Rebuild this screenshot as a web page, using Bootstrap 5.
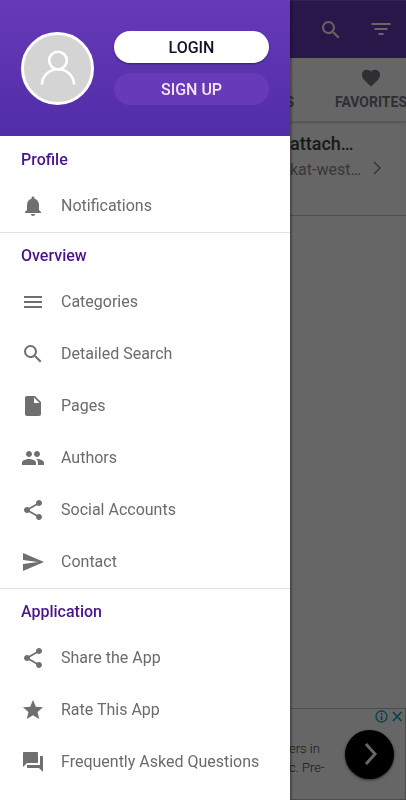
<!DOCTYPE html>
<html lang="en">
<head>
<meta charset="utf-8">
<meta name="viewport" content="width=device-width, initial-scale=1">
<title>Navigation drawer</title>
<link href="https://cdn.jsdelivr.net/npm/bootstrap@5.3.0/dist/css/bootstrap.min.css" rel="stylesheet">
<style>
  body { font-family: Roboto, "Liberation Sans", sans-serif; font-size: 16px; line-height: 24px; background: #fff; }
  svg { display: block; fill: currentColor; flex: none; }
  .plain { border: 0; background: none; padding: 0; color: inherit; }

  /* page under the drawer */
  .app-bar { height: 58px; background: #673ab7; color: #fff; padding-right: 13px; gap: 26px; border-top: 1px solid #7e57c2; }
  .tab-strip { height: 64px; border-bottom: 1px solid #dcdcdc; box-shadow: 0 1px 2px rgba(0,0,0,.2); overflow: hidden; }
  .tab-link { flex: none; width: 128px; height: 63px; padding-top: 10px; font-size: 14px; line-height: 20px; font-weight: 700; color: #757580; text-decoration: none; white-space: nowrap; gap: 4px; }
  .tab-link:last-child { margin-right: -29px; }
  .tab-link .tab-text { padding-right: 13px; }
  .post { height: 94px; border-bottom: 1px solid #c4c4c4; padding: 9px 20px 0 290px; color: #8c8c8c; }
  .post-title { font-size: 18px; line-height: 26px; font-weight: 500; color: #404040; }
  .post-text { font-size: 16px; line-height: 26px; }
  .post-arrow { margin-top: 28px; }
  .ad { height: 92px; border: 1px solid #bdbdbd; padding: 0 11px 0 288px; font-weight: 300; font-size: 13px; line-height: 19px; color: #404040; }
  .ad-marks { position: absolute; top: 1px; right: 2px; gap: 3px; color: #00a4c4; }
  .ad-go { width: 49px; height: 49px; background: #000; color: #fff; box-shadow: 0 1px 3px rgba(0,0,0,.6); }
  .scrim { background: rgba(0,0,0,.6); z-index: 1040; }

  /* drawer */
  .offcanvas.drawer { --bs-offcanvas-width: min(calc(100vw - 116px), 320px); --bs-offcanvas-bg: #fff; width: min(calc(100vw - 116px), 320px); background: #fff; border: 0; box-shadow: 1px 0 3px rgba(0,0,0,.5); overflow: hidden; }
  .drawer-head { flex: none; height: 136px; padding: 0 21px; gap: 20px; background: linear-gradient(#673ab7, #512da8); }
  .avatar { width: 73px; height: 73px; border: 3px solid #fff; background: #d4d4d4; color: #fff; flex: none; }
  .auth { gap: 10px; }
  .auth .btn { height: 32px; padding: 1px 0 0; border: 0; font-size: 16px; line-height: 31px; font-weight: 500; }
  .auth .btn-login { background: #fff; color: #14102a; box-shadow: 0 1px 2px rgba(0,0,0,.4); }
  .auth .btn-signup { background: #673ab7; color: #f3e5f5; }
  .drawer-nav { padding-top: 1px; }
  .group-title { margin: 0; padding: 2px 21px 0; font-size: 16px; line-height: 41px; font-weight: 500; color: #4a148c; }
  .group { border-bottom: 1px solid #e2e2e2; }
  .group:last-child { border: 0; }
  .entry { height: 52px; padding: 0 21px; gap: 16px; color: #6b6b6b; text-decoration: none; white-space: nowrap; }
  .entry svg { color: #6f6f6f; }
</style>
</head>
<body class="min-vh-100 d-flex flex-column overflow-hidden">

<svg class="d-none" aria-hidden="true">
  <symbol id="i-search" viewBox="0 0 24 24"><path d="M15.5 14h-.79l-.28-.27A6.47 6.47 0 0 0 16 9.500 6.500 6.500 0 1 0 9.500 16c1.610 0 3.090-.59 4.230-1.570l.27.28v.79l5 4.990L20.490 19l-4.990-5zm-6 0C7.010 14 5 11.990 5 9.500S7.010 5 9.500 5 14 7.010 14 9.500 11.990 14 9.500 14z"/></symbol>
  <symbol id="i-share" viewBox="0 0 24 24"><path d="M18 16.080c-.76 0-1.440.3-1.960.77L8.910 12.700c.05-.23.09-.46.09-.7s-.04-.47-.09-.7l7.050-4.110c.54.5 1.250.81 2.040.81 1.660 0 3-1.340 3-3s-1.340-3-3-3-3 1.340-3 3c0 .24.04.47.09.7L8.040 9.810C7.500 9.310 6.790 9 6 9c-1.660 0-3 1.340-3 3s1.340 3 3 3c.79 0 1.500-.31 2.040-.81l7.120 4.160c-.05.21-.08.43-.08.65 0 1.610 1.310 2.920 2.920 2.920s2.920-1.310 2.920-2.920-1.310-2.920-2.920-2.920z"/></symbol>
</svg>

<header class="app-bar d-flex align-items-center justify-content-end">
  <button class="plain" aria-label="Search"><svg width="24" height="24"><use href="#i-search"/></svg></button>
  <button class="plain" aria-label="Filter"><svg width="24" height="24" viewBox="0 0 24 24"><path d="M9.500 17h5v-2h-5v2zM2.500 5v2h19V5h-19zm3 7h13v-2h-13v2z"/></svg></button>
</header>
<nav class="tab-strip d-flex justify-content-end" aria-label="Sections">
  <a href="#" class="tab-link d-flex flex-column align-items-end"><svg width="20" height="20" viewBox="0 0 24 24" class="invisible"><path d="M4 4h16v16H4z"/></svg><span class="tab-text">CATEGORIES</span></a>
  <a href="#" class="tab-link d-flex flex-column align-items-center"><svg width="20" height="20" viewBox="1 1 22 22"><path d="M12 21.350l-1.450-1.320C5.400 15.360 2 12.280 2 8.500 2 5.420 4.420 3 7.500 3c1.740 0 3.410.81 4.500 2.090C13.090 3.810 14.760 3 16.500 3 19.580 3 22 5.420 22 8.500c0 3.780-3.400 6.860-8.550 11.540L12 21.350z"/></svg><span>FAVORITES</span></a>
</nav>
<main class="flex-grow-1">
  <article class="post d-flex justify-content-between">
    <div class="text-nowrap">
      <div class="post-title">attach…</div>
      <div class="post-text">kat-west…</div>
    </div>
    <svg class="post-arrow" width="18" height="18" viewBox="0 0 18 18" stroke="currentColor" stroke-width="1.600"><path d="M6 3l6 6-6 6" fill="none"/></svg>
  </article>
</main>
<aside class="ad position-relative d-flex align-items-center justify-content-between" aria-label="Advertisement">
  <div class="text-nowrap pt-2">ers in<br>c. Pre-</div>
  <button class="plain ad-go rounded-circle d-flex align-items-center justify-content-center" aria-label="Open"><svg width="24" height="24" viewBox="0 0 24 24" stroke="currentColor" stroke-width="3"><path d="M8 2l9 10-9 10" fill="none"/></svg></button>
  <div class="ad-marks d-flex">
    <svg width="13" height="13" viewBox="0 0 13 13"><circle cx="6.500" cy="6.500" r="5.500" fill="none" stroke="currentColor" stroke-width="1.300"/><path d="M5.800 5.500h1.500V10H5.800zM5.800 3h1.500v1.500H5.800z"/></svg>
    <svg width="12" height="13" viewBox="0 0 12 13" stroke="currentColor" stroke-width="1.500"><path d="M2 2l8.500 9M10.500 2L2 11"/></svg>
  </div>
</aside>

<div class="scrim position-fixed top-0 start-0 w-100 h-100"></div>

<div class="offcanvas offcanvas-start show drawer" tabindex="-1" aria-label="Menu" data-bs-backdrop="false">
  <div class="drawer-head d-flex align-items-center">
    <div class="avatar rounded-circle d-flex align-items-center justify-content-center">
      <svg width="36" height="36" viewBox="0 0 36 36" stroke="currentColor" stroke-width="2.600"><circle cx="18" cy="10.500" r="8.800" fill="none"/><path d="M2 34.500c0-8.500 7-15.200 16-15.200s16 6.700 16 15.200" fill="none"/></svg>
    </div>
    <div class="auth d-flex flex-column flex-grow-1">
      <button class="btn btn-login rounded-pill">LOGIN</button>
      <button class="btn btn-signup rounded-pill">SIGN UP</button>
    </div>
  </div>
  <nav class="drawer-nav">
    <section class="group">
      <h2 class="group-title">Profile</h2>
      <a href="#" class="entry d-flex align-items-center"><svg width="24" height="24" viewBox="0 0 24 24"><path d="M12 22c1.100 0 2-.9 2-2h-4c0 1.100.89 2 2 2zm6-6v-5c0-3.070-1.640-5.640-4.500-6.320V4c0-.83-.67-1.500-1.500-1.500s-1.500.67-1.500 1.500v.68C7.630 5.360 6 7.920 6 11v5l-2 2v1h16v-1l-2-2z"/></svg>Notifications</a>
    </section>
    <section class="group">
      <h2 class="group-title">Overview</h2>
      <a href="#" class="entry d-flex align-items-center"><svg width="24" height="24" viewBox="0 0 24 24"><path d="M3 18h18v-2H3v2zm0-5h18v-2H3v2zm0-7v2h18V6H3z"/></svg>Categories</a>
      <a href="#" class="entry d-flex align-items-center"><svg width="24" height="24"><use href="#i-search"/></svg>Detailed Search</a>
      <a href="#" class="entry d-flex align-items-center"><svg width="24" height="24" viewBox="0 0 24 24"><path d="M6 2c-1.100 0-1.990.9-1.990 2L4 20c0 1.100.89 2 1.990 2H18c1.100 0 2-.9 2-2V8l-6-6H6zm7 7V3.500L18.500 9H13z"/></svg>Pages</a>
      <a href="#" class="entry d-flex align-items-center"><svg width="24" height="24" viewBox="0 0 24 24"><path d="M16 11c1.660 0 2.990-1.340 2.990-3S17.660 5 16 5s-3 1.340-3 3 1.340 3 3 3zm-8 0c1.660 0 2.990-1.340 2.990-3S9.660 5 8 5 5 6.340 5 8s1.340 3 3 3zm0 2c-2.330 0-7 1.170-7 3.500V19h14v-2.500c0-2.330-4.670-3.500-7-3.500zm8 0c-.29 0-.62.02-.97.05 1.160.84 1.970 1.970 1.970 3.450V19h6v-2.500c0-2.330-4.670-3.500-7-3.500z"/></svg>Authors</a>
      <a href="#" class="entry d-flex align-items-center"><svg width="24" height="24"><use href="#i-share"/></svg>Social Accounts</a>
      <a href="#" class="entry d-flex align-items-center"><svg width="24" height="24" viewBox="0 0 24 24"><path d="M2.010 21L23 12 2.010 3 2 10l15 2-15 2z"/></svg>Contact</a>
    </section>
    <section class="group">
      <h2 class="group-title">Application</h2>
      <a href="#" class="entry d-flex align-items-center"><svg width="24" height="24"><use href="#i-share"/></svg>Share the App</a>
      <a href="#" class="entry d-flex align-items-center"><svg width="24" height="24" viewBox="0 0 24 24"><path d="M12 17.270L18.180 21l-1.640-7.030L22 9.240l-7.190-.61L12 2 9.190 8.630 2 9.240l5.460 4.730L5.820 21z"/></svg>Rate This App</a>
      <a href="#" class="entry d-flex align-items-center"><svg width="24" height="24" viewBox="0 0 24 24"><path d="M21 6h-2v9H6v2c0 .55.45 1 1 1h11l4 4V7c0-.55-.45-1-1-1zm-4 6V3c0-.55-.45-1-1-1H3c-.55 0-1 .45-1 1v14l4-4h10c.55 0 1-.45 1-1z"/></svg>Frequently Asked Questions</a>
    </section>
  </nav>
</div>
<script src="https://cdn.jsdelivr.net/npm/bootstrap@5.3.0/dist/js/bootstrap.bundle.min.js"></script>
</body>
</html>
